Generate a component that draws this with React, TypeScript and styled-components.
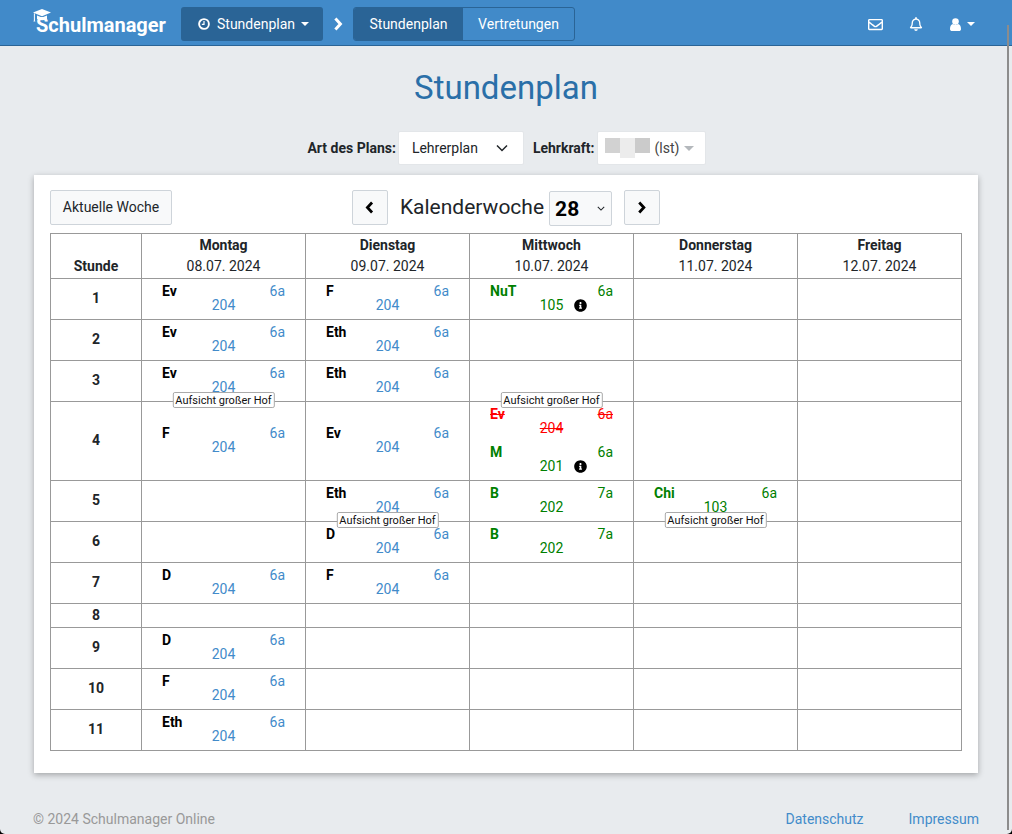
import styled, { createGlobalStyle } from "styled-components";
import { FaInfoCircle, FaRegBell, FaRegEnvelope } from "react-icons/fa";

type Tone = "plain" | "green" | "red";

interface ILesson {
  subject: string;
  group: string;
  room: string;
  tone?: Tone;
  info?: boolean;
}

interface IDay {
  lessons?: ILesson[];
  duty?: boolean;
}

const ev = { subject: "Ev", group: "6a", room: "204" };
const eth = { subject: "Eth", group: "6a", room: "204" };
const f = { subject: "F", group: "6a", room: "204" };
const d = { subject: "D", group: "6a", room: "204" };

const DAYS = [
  { name: "Montag", date: "08.07. 2024" },
  { name: "Dienstag", date: "09.07. 2024" },
  { name: "Mittwoch", date: "10.07. 2024" },
  { name: "Donnerstag", date: "11.07. 2024" },
  { name: "Freitag", date: "12.07. 2024" },
];

const ROWS: IDay[][] = [
  [
    { lessons: [ev] },
    { lessons: [f] },
    { lessons: [{ subject: "NuT", group: "6a", room: "105", tone: "green", info: true }] },
    {},
    {},
  ],
  [{ lessons: [ev] }, { lessons: [eth] }, {}, {}, {}],
  [{ lessons: [ev] }, { lessons: [eth] }, {}, {}, {}],
  [
    { lessons: [f], duty: true },
    { lessons: [ev] },
    {
      duty: true,
      lessons: [
        { ...ev, tone: "red" },
        { subject: "M", group: "6a", room: "201", tone: "green", info: true },
      ],
    },
    {},
    {},
  ],
  [
    {},
    { lessons: [eth] },
    { lessons: [{ subject: "B", group: "7a", room: "202", tone: "green" }] },
    { lessons: [{ subject: "Chi", group: "6a", room: "103", tone: "green" }] },
    {},
  ],
  [
    {},
    { lessons: [d], duty: true },
    { lessons: [{ subject: "B", group: "7a", room: "202", tone: "green" }] },
    { duty: true },
    {},
  ],
  [{ lessons: [d] }, { lessons: [f] }, {}, {}, {}],
  [{}, {}, {}, {}, {}],
  [{ lessons: [d] }, {}, {}, {}, {}],
  [{ lessons: [f] }, {}, {}, {}, {}],
  [{ lessons: [eth] }, {}, {}, {}, {}],
];

const Chevron = ({ left, height }: { left?: boolean; height: number }) => (
  <svg viewBox="0 0 10 14" height={height} width={(height * 10) / 14} aria-hidden="true">
    <path
      d={left ? "M7.6 1.6 L2.6 7 L7.6 12.4" : "M2.4 1.6 L7.4 7 L2.4 12.4"}
      fill="none"
      stroke="currentColor"
      strokeWidth="3"
    />
  </svg>
);

const App = () => {
  return (
    <Page>
      <GlobalStyle />
      <Navbar>
        <Logo>
          <LogoCap viewBox="0 0 18 18" aria-hidden="true">
            <path d="M9 1 L18 4.6 L9 8.2 L0 4.6 Z" fill="#fff" />
            <path d="M4 7.6 L9 9.6 L14 7.6 L14 11 Q9 13.4 4 11 Z" fill="#fff" />
            <path d="M1.4 5.4 L1.4 12" stroke="#fff" strokeWidth="1" fill="none" />
            <path d="M0.4 13.6 L1.4 11 L2.4 13.6 Z" fill="#fff" />
          </LogoCap>
          Schulmanager
        </Logo>
        <NavButton>
          <svg viewBox="0 0 12 12" width={12} height={12} aria-hidden="true">
            <circle cx="6" cy="6" r="4.9" fill="none" stroke="#fff" strokeWidth="1.9" />
            <path d="M6 3 V6.4 H3.8" fill="none" stroke="#fff" strokeWidth="1.2" />
          </svg>
          <span>Stundenplan</span>
          <NavCaret />
        </NavButton>
        <NavChevron>
          <Chevron height={14} />
        </NavChevron>
        <NavGroup>
          <NavTab $active>Stundenplan</NavTab>
          <NavTab>Vertretungen</NavTab>
        </NavGroup>
        <NavIcons>
          <FaRegEnvelope size={15} />
          <FaRegBell size={14} />
          <UserMenu>
            <svg viewBox="0 0 11 13" width={11} height={13} aria-hidden="true">
              <circle cx="5.5" cy="3.6" r="3.3" fill="#fff" />
              <path
                d="M0 11 C0 8 1.2 6.4 3 6 C4.4 7.2 6.6 7.2 8 6 C9.8 6.4 11 8 11 11 C11 12.4 10 13 9 13 H2 C1 13 0 12.4 0 11 Z"
                fill="#fff"
              />
            </svg>
            <Caret />
          </UserMenu>
        </NavIcons>
      </Navbar>

      <Title>Stundenplan</Title>

      <Filters>
        <FilterLabel>Art des Plans:</FilterLabel>
        <PlanSelect>
          Lehrerplan
          <SelectArrow viewBox="0 0 12 8" aria-hidden="true">
            <path d="M1 1.5 L6 6.5 L11 1.5" fill="none" stroke="#212529" strokeWidth="1.5" />
          </SelectArrow>
        </PlanSelect>
        <FilterLabel>Lehrkraft:</FilterLabel>
        <TeacherSelect>
          <Blurred>
            <BlurBlock $shade="#d2d2d2" />
            <BlurBlock $shade="#ececec" $tall />
            <BlurBlock $shade="#cbcbcb" />
          </Blurred>
          <span>(lst)</span>
          <GrayCaret />
        </TeacherSelect>
      </Filters>

      <Card>
        <Toolbar>
          <CurrentWeek>Aktuelle Woche</CurrentWeek>
          <WeekNav>
            <ArrowButton>
              <Chevron left height={13} />
            </ArrowButton>
            <WeekLabel>Kalenderwoche</WeekLabel>
            <WeekSelect>
              28
              <WeekArrow viewBox="0 0 10 6" aria-hidden="true">
                <path d="M1 1 L5 5 L9 1" fill="none" stroke="#212529" strokeWidth="1.3" />
              </WeekArrow>
            </WeekSelect>
            <ArrowButton>
              <Chevron height={13} />
            </ArrowButton>
          </WeekNav>
        </Toolbar>

        <Schedule>
          <colgroup>
            <col width={91} />
            {DAYS.map((day) => (
              <col key={day.name} width={164} />
            ))}
          </colgroup>
          <thead>
            <tr>
              <HourHead>Stunde</HourHead>
              {DAYS.map((day) => (
                <DayHead key={day.name}>
                  <strong>{day.name}</strong>
                  <div>{day.date}</div>
                </DayHead>
              ))}
            </tr>
          </thead>
          <tbody>
            {ROWS.map((row, i) => (
              <tr key={i}>
                <HourCell>{i + 1}</HourCell>
                {row.map((cell, j) => (
                  <SlotCell key={j}>
                    {cell.duty && <DutyTag>Aufsicht großer Hof</DutyTag>}
                    {cell.lessons?.map((lesson, k) => (
                      <Lesson key={k} $tone={lesson.tone || "plain"}>
                        <LessonTop>
                          <Subject $tone={lesson.tone || "plain"}>{lesson.subject}</Subject>
                          <span>{lesson.group}</span>
                        </LessonTop>
                        <LessonRoom>
                          <span />
                          <span>{lesson.room}</span>
                          {lesson.info && (
                            <InfoIcon>
                              <FaInfoCircle size={13} />
                            </InfoIcon>
                          )}
                        </LessonRoom>
                      </Lesson>
                    ))}
                  </SlotCell>
                ))}
              </tr>
            ))}
          </tbody>
        </Schedule>
      </Card>

      <Footer>
        <Copyright>© 2024 Schulmanager Online</Copyright>
        <FooterLinks>
          <a>Datenschutz</a>
          <a>Impressum</a>
        </FooterLinks>
      </Footer>
      <ScrollThumb />
    </Page>
  );
};

const GlobalStyle = createGlobalStyle`
  html, body {
    margin: 0;
    padding: 0;
    height: 100%;
    overflow: hidden;
    background: #000;
  }
  body {
    font-family: Roboto, "Liberation Sans", sans-serif;
    font-size: 14px;
    color: #212529;
  }
  * {
    box-sizing: border-box;
  }
`;

const Page = styled.div`
  position: relative;
  height: 100vh;
  display: flex;
  flex-direction: column;
  background: #e8ebee;
  border-radius: 0 0 5px 5px;
  overflow: hidden;
`;

const Navbar = styled.header`
  flex: none;
  height: 46px;
  display: flex;
  align-items: flex-start;
  padding: 7px 0 0 36px;
  background: #418ac9;
  border-bottom: 1px solid #2a6496;
  color: #fff;
`;

const Logo = styled.div`
  position: relative;
  width: 145px;
  font-size: 20px;
  font-weight: 700;
  line-height: 36px;
`;

const LogoCap = styled.svg`
  position: absolute;
  left: -3px;
  top: 1px;
  width: 18px;
  height: 18px;
`;

const NavButton = styled.div`
  width: 142px;
  height: 34px;
  display: flex;
  align-items: center;
  gap: 7px;
  padding-left: 17px;
  background: #2a6496;
  border-radius: 3px;
`;

const Caret = styled.i`
  width: 0;
  height: 0;
  margin-left: 2px;
  border-left: 4px solid transparent;
  border-right: 4px solid transparent;
  border-top: 4px solid #fff;
`;

const NavCaret = styled(Caret)`
  margin-left: -1px;
`;

const NavChevron = styled.div`
  width: 30px;
  height: 34px;
  display: flex;
  align-items: center;
  justify-content: center;
`;

const NavGroup = styled.div`
  height: 34px;
  width: 222px;
  display: flex;
  border: 1px solid #2a6496;
  border-radius: 3px;
  overflow: hidden;
`;

const NavTab = styled.div<{ $active?: boolean }>`
  display: flex;
  align-items: center;
  justify-content: center;
  flex: ${({ $active }) => ($active ? "0 0 109px" : "1")};
  background: ${({ $active }) => ($active ? "#2a6496" : "transparent")};
`;

const NavIcons = styled.div`
  margin-left: auto;
  height: 34px;
  display: flex;
  align-items: center;
  gap: 26px;
  padding-right: 37px;
`;

const UserMenu = styled.div`
  display: flex;
  align-items: center;
  gap: 4px;
  margin-left: 1px;
`;

const Title = styled.h1`
  margin: 20px 0 0;
  height: 43px;
  font-size: 33px;
  font-weight: 400;
  line-height: 43px;
  text-align: center;
  color: #2a6fa8;
`;

const Filters = styled.div`
  display: flex;
  align-items: center;
  justify-content: center;
  height: 34px;
  margin-top: 22px;
  padding-left: 1px;
`;

const FilterLabel = styled.label`
  font-weight: 700;
  margin-right: 2px;
`;

const PlanSelect = styled.div`
  width: 126px;
  height: 34px;
  display: flex;
  align-items: center;
  justify-content: space-between;
  margin-right: 9px;
  padding: 0 15px 0 13px;
  background: #fff;
  border: 1px solid #e3e6e9;
  border-radius: 2px;
`;

const SelectArrow = styled.svg`
  width: 12px;
  height: 8px;
`;

const TeacherSelect = styled.div`
  width: 109px;
  height: 34px;
  display: flex;
  align-items: center;
  padding-left: 7px;
  background: #fff;
  border: 1px solid #e3e6e9;
  border-radius: 2px;
  color: #444;
`;

const Blurred = styled.div`
  display: flex;
  align-items: flex-start;
  height: 20px;
  margin-right: 5px;
`;

const BlurBlock = styled.i<{ $shade: string; $tall?: boolean }>`
  width: 15px;
  height: ${({ $tall }) => ($tall ? "20px" : "15px")};
  background: ${({ $shade }) => $shade};
`;

const GrayCaret = styled.i`
  width: 0;
  height: 0;
  margin-left: 5px;
  border-left: 5px solid transparent;
  border-right: 5px solid transparent;
  border-top: 5px solid #b4b8bc;
`;

const Card = styled.main`
  flex: none;
  height: 598px;
  margin: 10px 34px 0;
  padding: 15px 16px 0;
  background: #fff;
  box-shadow: 0 2px 6px rgba(0, 0, 0, 0.3);
`;

const Toolbar = styled.div`
  display: grid;
  grid-template-columns: 1fr auto 1fr;
  align-items: start;
  height: 43px;
`;

const ToolButton = styled.button`
  height: 35px;
  padding: 0;
  font: inherit;
  color: #212529;
  background: #f8f9fa;
  border: 1px solid #ced4da;
  border-radius: 2px;
`;

const CurrentWeek = styled(ToolButton)`
  width: 122px;
  padding-bottom: 2px;
  justify-self: start;
`;

const WeekNav = styled.div`
  grid-column: 2;
  display: flex;
  align-items: flex-start;
`;

const ArrowButton = styled(ToolButton)`
  width: 36px;
  display: flex;
  align-items: center;
  justify-content: center;
  color: #000;
`;

const WeekLabel = styled.div`
  height: 35px;
  margin: 0 5px 0 12px;
  font-size: 21px;
  line-height: 34px;
`;

const WeekSelect = styled.div`
  width: 63px;
  height: 35px;
  display: flex;
  align-items: center;
  justify-content: space-between;
  margin: 1px 12px 0 0;
  padding: 0 6px 0 5px;
  font-size: 21px;
  font-weight: 700;
  color: #000;
  background: #f8f9fa;
  border: 1px solid #ced4da;
  border-radius: 2px;
`;

const WeekArrow = styled.svg`
  width: 8px;
  height: 5px;
`;

const Schedule = styled.table`
  width: 912px;
  table-layout: fixed;
  border-collapse: collapse;
  th,
  td {
    border: 1px solid #999;
    padding: 1px;
  }
`;

const HourHead = styled.th`
  vertical-align: bottom;
  line-height: 21px;
`;

const DayHead = styled.th`
  font-weight: 400;
  line-height: 21px;
  text-align: center;
  vertical-align: top;
`;

const HourCell = styled.td`
  height: 24px;
  font-weight: 700;
  text-align: center;
  && {
    padding: 0 1px 2px;
  }
`;

const SlotCell = styled.td`
  position: relative;
  height: 24px;
`;

const DutyTag = styled.div`
  position: absolute;
  left: 50%;
  top: -10px;
  z-index: 1;
  transform: translateX(-50%);
  height: 16px;
  padding: 0 2px;
  font-size: 11px;
  line-height: 15px;
  white-space: nowrap;
  color: #111;
  background: #fff;
  border: 1px solid #aaa;
  border-radius: 2px;
`;

const TONES: Record<Tone, string> = {
  plain: "#428bca",
  green: "#008000",
  red: "#f00",
};

const Lesson = styled.div<{ $tone: Tone }>`
  height: 38px;
  padding: 4px 19px 0;
  line-height: 14px;
  color: ${({ $tone }) => TONES[$tone]};
  text-decoration: ${({ $tone }) => ($tone === "red" ? "line-through" : "none")};
`;

const LessonTop = styled.div`
  display: flex;
  justify-content: space-between;
`;

const Subject = styled.span<{ $tone: Tone }>`
  font-weight: 700;
  color: ${({ $tone }) => ($tone === "plain" ? "#000" : TONES[$tone])};
`;

const LessonRoom = styled.div`
  display: grid;
  grid-template-columns: 1fr auto 1fr;
`;

const InfoIcon = styled.span`
  display: flex;
  align-items: center;
  margin: 1px 0 0 11px;
  color: #000;
`;

const Footer = styled.footer`
  display: flex;
  justify-content: space-between;
  margin: 36px 33px 0;
  line-height: 21px;
`;

const Copyright = styled.div`
  color: #999;
`;

const FooterLinks = styled.div`
  display: flex;
  gap: 45px;
  color: #428bca;
`;

const ScrollThumb = styled.div`
  position: absolute;
  left: 1007px;
  top: 25px;
  bottom: 4px;
  width: 2px;
  background: #8c8c8c;
`;

export default App;
